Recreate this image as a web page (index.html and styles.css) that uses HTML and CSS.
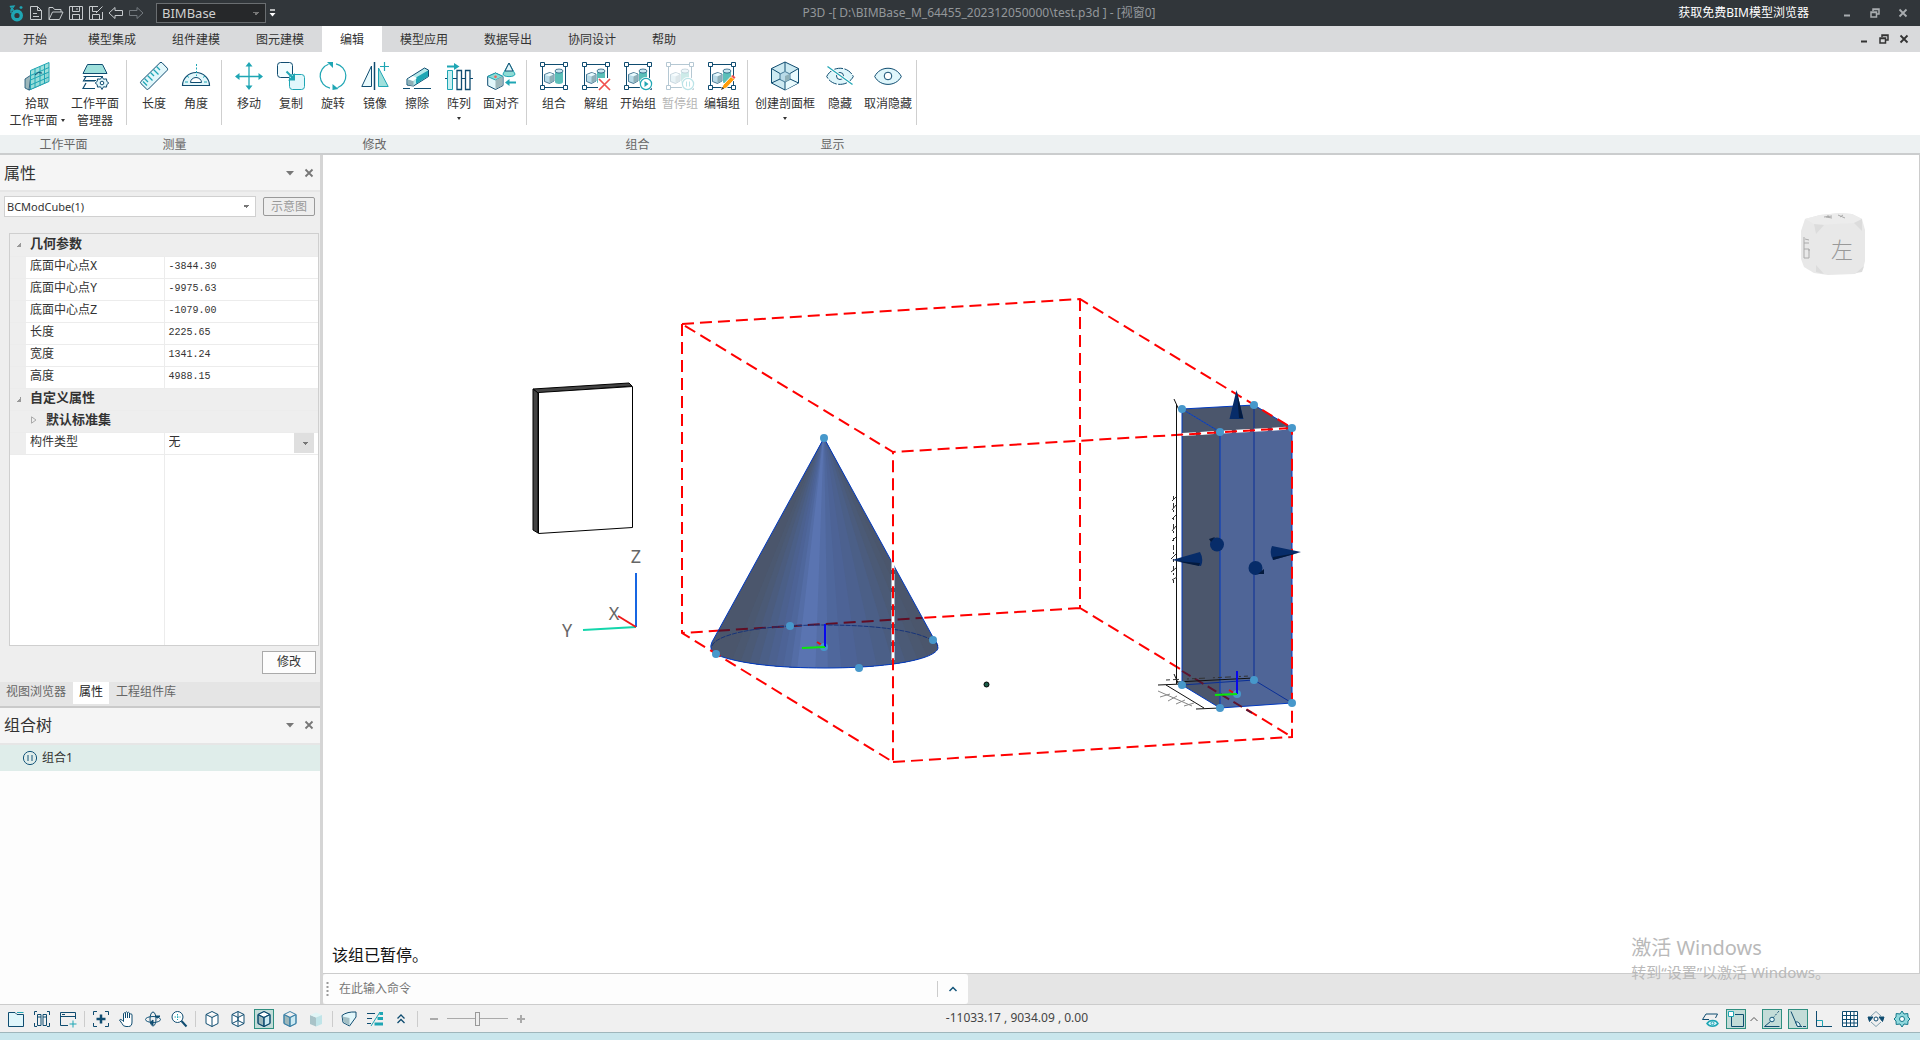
FILE: index.html
```html
<!DOCTYPE html>
<html lang="zh-CN">
<head>
<meta charset="utf-8">
<title>P3D - BIMBase</title>
<link rel="stylesheet" href="styles.css">
</head>
<body>
<svg class="defs" aria-hidden="true">
  <symbol id="frame" viewBox="0 0 28 28">
    <path d="M2.500 2.500h23v23h-23z" fill="none" stroke="#0f4c70"/>
    <path d="M.5.500h4v4h-4zM23.500.500h4v4h-4zM.5 23.500h4v4h-4zM23.500 23.500h4v4h-4z" fill="#fff" stroke="#0f4c70"/>
    <path d="M15 9v11c0 2.500 8 2.500 8 0V9z" fill="#5bbfb9"/><ellipse cx="19" cy="9" rx="4" ry="2" fill="#c9e6f0" stroke="#0f4c70" stroke-width=".7"/>
    <path d="M4.500 12.500l5-2 4.500 1.500v7l-4.500 2.500-5-2z" fill="#b9dbe8" stroke="#0f4c70" stroke-width=".7"/>
    <path d="M9.500 14.500l4-2v6.500l-4 2z" fill="#8fb0b8"/><path d="M5 13l5-2 3.500 1.300-4 2z" fill="#eafafd"/>
  </symbol>
  <symbol id="cube" viewBox="0 0 18 18">
    <path d="M9 1.500l6 3v9l-6 3-6-3v-9zM3 4.500l6 3 6-3M9 7.500v9" stroke-linejoin="round"/>
  </symbol>
  <symbol id="restore" viewBox="0 0 10 10"><path d="M3 3V1h6v5H7M3 1.500h6" fill="none" stroke="currentColor" stroke-width="1.500"/><path d="M1 4h5.500v5H1zM1 4.500h5" fill="none" stroke="currentColor" stroke-width="1.500"/></symbol>
  <symbol id="close" viewBox="0 0 10 10"><path d="M1.500 1.500l7 7M8.500 1.500l-7 7" stroke="currentColor" stroke-width="1.800"/></symbol>
  <symbol id="min" viewBox="0 0 10 10"><path d="M2 7.500h6" stroke="currentColor" stroke-width="2"/></symbol>
  <symbol id="down" viewBox="0 0 10 10"><path d="M1 3h8L5 7.500z" fill="currentColor"/></symbol>
</svg>

<header class="titlebar">
  <div class="quick">
    <button class="qa" aria-label="BIMBase"><svg viewBox="0 0 18 18"><circle cx="10" cy="11.500" r="4.300" fill="none" stroke="#1fa6b4" stroke-width="3.400"/><path d="M4 9V6h3M3.500 2.500L7 2 5 5zM12.500 3.500h3M14 2v3" fill="none" stroke="#1fa6b4" stroke-width="1.300"/></svg></button>
    <button class="qa" aria-label="新建"><svg viewBox="0 0 18 18"><path d="M3.500 2.500h7l4 4v9h-11zM10.500 2.500v4h4M6 9.500h4M6 12.500h6"/></svg></button>
    <button class="qa" aria-label="打开"><svg viewBox="0 0 18 18"><path d="M2 15.500v-12h4l1.500 2H14v2.500M2 15.500L5.500 8H16l-3.500 7.500z"/></svg></button>
    <button class="qa" aria-label="保存"><svg viewBox="0 0 18 18"><path d="M2.500 2.500h13v13h-13zM5.500 2.500v5h7v-5M5.500 15.500v-5h7v5M10 4v2"/></svg></button>
    <button class="qa" aria-label="另存为"><svg viewBox="0 0 18 18"><path d="M11 2.500H2.500v13h13V8M5.500 2.500v5h5M5.500 15.500v-5h7v5M9 9l6.500-6.500"/></svg></button>
    <button class="qa" aria-label="撤销"><svg viewBox="0 0 18 18"><path d="M2 9l6-5.500v3h7.500v5H8v3z"/></svg></button>
    <button class="qa dim" aria-label="重做"><svg viewBox="0 0 18 18"><path d="M16 9l-6-5.500v3H2.500v5H10v3z"/></svg></button>
    <select class="workspace" aria-label="工作空间"><option>BIMBase</option></select>
    <button class="more" aria-label="自定义"><svg viewBox="0 0 10 10"><path d="M3 2h5" stroke="#fff" stroke-width="1.300"/><path d="M2.500 5h6l-3 3.500z" fill="#fff"/></svg></button>
  </div>
  <h1 class="doc">P3D -[ D:\BIMBase_M_64455_202312050000\test.p3d ] - [视窗0]</h1>
  <div class="window-controls">
    <a href="#" class="get">获取免费BIM模型浏览器</a>
    <button class="wc wide" aria-label="最小化"><svg><use href="#min"/></svg></button>
    <button class="wc wide" aria-label="还原"><svg><use href="#restore"/></svg></button>
    <button class="wc wide" aria-label="关闭"><svg><use href="#close"/></svg></button>
  </div>
</header>

<nav class="tabs">
  <a href="#" class="file">开始</a><a href="#">模型集成</a><a href="#">组件建模</a><a href="#">图元建模</a><a href="#" class="active">编辑</a><a href="#">模型应用</a><a href="#">数据导出</a><a href="#">协同设计</a><a href="#">帮助</a>
  <div class="doc-controls">
    <button class="wc" aria-label="最小化文档"><svg><use href="#min"/></svg></button>
    <button class="wc" aria-label="还原文档"><svg><use href="#restore"/></svg></button>
    <button class="wc" aria-label="关闭文档"><svg><use href="#close"/></svg></button>
  </div>
</nav>

<section class="ribbon">
  <div class="group">
    <div class="items">
      <button class="item w62"><svg viewBox="0 0 28 28"><path d="M2 17l6-4v14l-2 1-4-2z" fill="#9db7bb" stroke="#0f4c70" stroke-width=".8"/><path d="M6 28l18-8V11L8 13z" fill="#c9e6f0" stroke="#0f4c70" stroke-width=".8"/><path d="M7.500 8.500L26 .5v19L7.500 27.500z" fill="#8edbd5" fill-opacity=".85" stroke="#1fa6b4"/><path d="M12 6.500v19M17 4.500v19M21.500 2.500v19M7.500 13.500l18.500-8M7.500 18l18.500-8M7.500 23L26 15" stroke="#1fa6b4" fill="none"/><path d="M12 13q3-4 7-2" stroke="#0f4c70" fill="none"/></svg><span>拾取<br>工作平面<i class="tri"></i></span></button>
      <button class="item w54"><svg viewBox="0 0 28 28"><path d="M6.500 2.500h15L26 11.500H2z" fill="#9fe0dc" stroke="#0f4c70"/><path d="M22 14.500H2.500M2.500 14.500h3M4 18.500h11M5 14.500L2.500 19H14M5 21l-3 5.500h12" fill="none" stroke="#0f4c70" stroke-width="1.200"/><path d="M21 14.500l1.500 2.700 3-.3.300 2.500 2 1.600-2 1.600-.3 2.500-3-.3L21 27.500l-1.500-2.700-3 .3-.3-2.500-2-1.600 2-1.600.3-2.500 3 .3z" fill="#e2f7fb" stroke="#0f4c70"/><circle cx="21" cy="21" r="1.800" fill="#fff" stroke="#0f4c70"/></svg><span>工作平面<br>管理器</span></button>
    </div>
    <div class="caption">工作平面</div>
  </div>
  <div class="group">
    <div class="items">
      <button class="item w42"><svg viewBox="0 0 28 28"><path d="M20 .7q1-.7 2 0l5.300 5.500q.7 1 0 2L8.500 27q-1 .9-2 0L.9 21.500q-.9-1 0-2z" fill="#e2f7fb" stroke="#0f4c70"/><path d="M4.500 16.500l3.500 3.500M7.500 13.500l5 5M10.500 10.500l3.500 3.500M13.500 7.500l5 5M16.500 4.500L20 8M3 19.500l4 4" stroke="#1fa6b4" stroke-width="1.300"/></svg><span>长度</span></button>
      <button class="item w42"><svg viewBox="0 0 28 28"><path d="M.5 23.500a13.500 13 0 0 1 27 0z" fill="#e2f7fb" stroke="#0f4c70" stroke-width="1.200"/><path d="M8.500 20.500a5.500 5 0 0 1 11 0z" fill="#fff" stroke="#0f4c70"/><path d="M14.500 2v12" stroke="#1fa6b4" stroke-dasharray="2 1.500"/><path d="M5 14l2 1.500M23 14l-2 1.500M3 20h3M22 20h3" stroke="#1fa6b4"/></svg><span>角度</span></button>
    </div>
    <div class="caption">测量</div>
  </div>
  <div class="group">
    <div class="items">
      <button class="item w42"><svg viewBox="0 0 28 28"><path d="M14 2v24M2 14.500h24" stroke="#1fa6b4" stroke-width="1.300"/><path d="M14 0l3.500 4.500h-7zM14 28l3.500-4.500h-7zM0 14.500L4.500 11v7zM28 14.500L23.500 11v7z" fill="#1fa6b4"/></svg><span>移动</span></button>
      <button class="item w42"><svg viewBox="0 0 28 28"><rect x=".5" y=".5" width="15" height="15" rx="3" fill="#f2fcfe" stroke="#0f4c70"/><rect x="12.500" y="12.500" width="15" height="15" rx="3" fill="#e2f7fb" stroke="#1fa6b4"/><path d="M9.500 9.500l6 6" stroke="#1fa6b4" stroke-width="2"/><path d="M18 11v7.500h-7z" fill="#1fa6b4"/></svg><span>复制</span></button>
      <button class="item w42"><svg viewBox="0 0 28 28"><path d="M9.500 2.200a12.500 12.500 0 0 0 1.500 24M18.500 25.800a12.500 12.500 0 0 0-1.500-24" fill="none" stroke="#1fa6b4" stroke-width="1.200"/><path d="M8 0h6v6zM13.500 28v-6l6 5z" fill="#1fa6b4"/></svg><span>旋转</span></button>
      <button class="item w42"><svg viewBox="0 0 28 28"><path d="M.8 24.500h9.700V4z" fill="#e8f9fc" stroke="#0f4c70"/><path d="M17.500 24.500h9.700L17.500 6z" fill="#9fe0dc" stroke="#1fa6b4"/><path d="M13.500 0v28" stroke="#0f4c70" stroke-width="1.500"/><path d="M23.500 0v9M19 4.500h9" stroke="#1fa6b4" stroke-width="1.200"/></svg><span>镜像</span></button>
      <button class="item w42"><svg viewBox="0 0 28 28"><path d="M0 26.500h7M11 26.500h17" stroke="#0f4c70"/><path d="M4 17L21.500 6l4 2v6.500L10.500 24 4 23z" fill="#b7e9ea" stroke="#0f4c70"/><path d="M13 15.500L25 8.500v6L13 22z" fill="#1fa6b4"/><path d="M4.500 17.500l6 1.500v5L5 23z" fill="#8fb0b8"/><path d="M5 17l5-3 4 2-4 3z" fill="#fff"/></svg><span>擦除</span></button>
      <button class="item w42"><svg viewBox="0 0 28 28"><path d="M2 4.500h8" stroke="#1fa6b4" stroke-width="2"/><path d="M9 1l5.500 3.500L9 8z" fill="#1fa6b4"/><path d="M0 16.500h28" stroke="#0f4c70"/><path d="M2.500 8.500h5v19h-5z" fill="#c9f0f2" stroke="#1fa6b4"/><path d="M12 8.500h4.500v19H12zM20.500 8.500H25v19h-4.500z" fill="#fff" stroke="#0f4c70" stroke-width="1.300"/></svg><span>阵列</span><i class="tri below"></i></button>
      <button class="item w42"><svg viewBox="0 0 28 28"><path d="M22 1l6 11c0 3.500-12 3.500-12 0z" fill="#8edbd5" stroke="#1fa6b4"/><path d="M22 1l4 8h-8z" fill="#e2f7fb" stroke="#0f4c70"/><path d="M.7 14.500L8.500 11l7.500 3.500v9L8.500 27.500.7 23.500z" fill="#e2f7fb" stroke="#0f4c70"/><path d="M.7 14.500L8.500 11l7.500 3.500-7.500 3.500z" fill="#8edbd5" stroke="#1fa6b4"/><path d="M8.500 18l7-3.500v9l-7 3.500z" fill="#9db7bb"/><circle cx="8.500" cy="14.800" r="1.300" fill="#f0605a"/><path d="M21 20.500h8" stroke="#1fa6b4" stroke-width="2"/><path d="M22.500 17v7L18 20.500z" fill="#1fa6b4"/></svg><span>面对齐</span></button>
    </div>
    <div class="caption">修改</div>
  </div>
  <div class="group">
    <div class="items">
      <button class="item w42"><svg viewBox="0 0 28 28"><use href="#frame"/></svg><span>组合</span></button>
      <button class="item w42"><svg viewBox="0 0 28 28"><use href="#frame"/><path d="M16 16h13v13H16z" fill="#fff"/><path d="M17 17l11 11M28 17L17 28" stroke="#f0504e" stroke-width="1.700"/></svg><span>解组</span></button>
      <button class="item w42"><svg viewBox="0 0 28 28"><use href="#frame"/><circle cx="22" cy="22" r="7" fill="#fff"/><circle cx="22" cy="22" r="5.600" fill="#fff" stroke="#1fa6b4" stroke-width="1.200"/><path d="M20.500 19l4 3-4 3z" fill="#1fa6b4"/></svg><span>开始组</span></button>
      <button class="item w42" disabled><svg viewBox="0 0 28 28"><use href="#frame"/><circle cx="22" cy="22" r="7" fill="#fff"/><circle cx="22" cy="22" r="5.600" fill="#fff" stroke="#1fa6b4" stroke-width="1.200"/><path d="M20.500 19.500v5M23.500 19.500v5" stroke="#1fa6b4"/></svg><span>暂停组</span></button>
      <button class="item w42"><svg viewBox="0 0 28 28"><use href="#frame"/><path d="M13 28l2-5 8-8.500 3.500 3-8 8.500z" fill="#ff9d0a" stroke="#fff"/><path d="M23 14l3 3 1.500-1.500L25 13z" fill="#f0504e"/><path d="M13 28l1.200-3 2 1.600z" fill="#3a3a3a"/></svg><span>编辑组</span></button>
    </div>
    <div class="caption">组合</div>
  </div>
  <div class="group">
    <div class="items">
      <button class="item w62"><svg viewBox="0 0 28 28"><path d="M14 0l13.500 6.500v14.500L14 28 .5 21V6.500z" fill="#cdeaf2" stroke="#0f4c70"/><path d="M14 28V14L27 7v14z" fill="#e9fafd"/><path d="M14 0v9M.5 6.500L9 11.500M27.500 6.500L19 11.500M.5 21L9 17M27.500 21L19 17M14 28v-8" stroke="#0f4c70"/><path d="M9 12l5-2.500 5 2.500v5.500L14 20l-5-2.500z" fill="#b9dbe8" stroke="#0f4c70" stroke-width=".7"/><path d="M14 14l4.500-2v5.500L14 19.500z" fill="#8fb0b8"/></svg><span>创建剖面框</span><i class="tri below"></i></button>
      <button class="item w48"><svg viewBox="0 0 28 28"><path d="M.7 14.500C6 3.500 22 3.500 27.300 14.500 22 25 6 25 .7 14.500z" fill="#dff6fb" stroke="#0f4c70" stroke-dasharray="9 1.500"/><circle cx="14" cy="14" r="3.500" fill="#fff" stroke="#0f4c70"/><path d="M1.500 4.500l25 18" stroke="#fff" stroke-width="3"/><path d="M1.500 4.500l25 18" stroke="#1fa6b4" stroke-width="1.200"/></svg><span>隐藏</span></button>
      <button class="item w48"><svg viewBox="0 0 28 28"><path d="M.7 14.500C6 3.500 22 3.500 27.300 14.500 22 25 6 25 .7 14.500z" fill="#dff6fb" stroke="#0f4c70"/><circle cx="14" cy="14" r="3.800" fill="#fff" stroke="#0f4c70"/></svg><span>取消隐藏</span></button>
    </div>
    <div class="caption">显示</div>
  </div>
  <div class="group rest"><div class="items"></div><div class="caption"></div></div>
</section>

<main class="work">
  <aside class="side">
    <section class="props">
      <header class="panel-head"><h2>属性</h2><button aria-label="菜单"><svg><use href="#down"/></svg></button><button aria-label="关闭"><svg><use href="#close"/></svg></button></header>
      <div class="pick"><select aria-label="对象"><option>BCModCube(1)</option></select><button class="sketch">示意图</button></div>
      <div class="grid">
        <table>
          <colgroup><col class="c-gut"><col class="c-name"><col></colgroup>
          <tbody>
          <tr class="cat"><td class="gut"><i class="open"></i></td><th colspan="2">几何参数</th></tr>
          <tr><td class="gut"></td><td>底面中心点X</td><td>-3844.30</td></tr>
          <tr><td class="gut"></td><td>底面中心点Y</td><td>-9975.63</td></tr>
          <tr><td class="gut"></td><td>底面中心点Z</td><td>-1079.00</td></tr>
          <tr><td class="gut"></td><td>长度</td><td>2225.65</td></tr>
          <tr><td class="gut"></td><td>宽度</td><td>1341.24</td></tr>
          <tr><td class="gut"></td><td>高度</td><td>4988.15</td></tr>
          <tr class="cat"><td class="gut"><i class="open"></i></td><th colspan="2">自定义属性</th></tr>
          <tr class="cat sub"><td class="gut"></td><th colspan="2"><svg viewBox="0 0 8 8"><path d="M1.500.8L6 4 1.500 7.200z" fill="none" stroke="#aaa"/></svg>默认标准集</th></tr>
          <tr><td class="gut"></td><td>构件类型</td><td><select aria-label="构件类型"><option>无</option></select></td></tr>
          <tr class="fill"><td></td><td></td><td></td></tr>
          </tbody>
        </table>
      </div>
      <div class="apply"><button>修改</button></div>
      <nav class="dock"><a href="#">视图浏览器</a><a href="#" class="active">属性</a><a href="#">工程组件库</a></nav>
    </section>
    <section class="tree">
      <header class="panel-head"><h2>组合树</h2><button aria-label="菜单"><svg><use href="#down"/></svg></button><button aria-label="关闭"><svg><use href="#close"/></svg></button></header>
      <ul><li><svg viewBox="0 0 16 16"><circle cx="8" cy="8" r="6.600" fill="none" stroke="#14557a"/><path d="M6 5v6M10 5v6" stroke="#14557a"/></svg>组合1</li></ul>
    </section>
  </aside>

  <div class="stage">
    <div class="canvas">
      <svg class="scene" viewBox="323 155 1596 818" role="img" aria-label="三维视图">
        <defs><clipPath id="cone"><path d="M824 438L712 642Q708 650 717 655C740 664 780 668 825 668C890 668 936 659 938 648Q938 643 934 639z"/></clipPath></defs>
        <path d="M533 389l96-6 3 3-94 7z" fill="#444" stroke="#000"/>
        <path d="M533 389l5 4v140l-5-3z" fill="#444" stroke="#000"/>
        <path d="M538.500 392.500l94-6v141l-94 6z" fill="#fff" stroke="#000"/>
        <g class="box"><path d="M1080 299V608L1292 737M1080 608L682 633"/></g>

        <g clip-path="url(#cone)">
          <path d="M824 400L640 680H1010z" fill="#4b566c"/>
          <path d="M824 430L724 680H938z" fill="#4b5870"/>
          <path d="M824 430L734 680H926z" fill="#4b5a76"/>
          <path d="M824 430L744 680H912z" fill="#4b5c7e"/>
          <path d="M824 430L754 680H898z" fill="#4b5f87"/>
          <path d="M824 430L764 680H880z" fill="#4c618f"/>
          <path d="M824 430L773 680H860z" fill="#4d6396"/>
          <path d="M824 430L781 680H842z" fill="#4f679c"/>
          <path d="M824 430L789 680H828z" fill="#546da6"/>
          <path d="M824 430L796 680H815z" fill="#5a74b1"/>
          <path d="M682 633L1080 608" stroke="#610d24" stroke-width="2" stroke-dasharray="12 6"/>
        </g>
        <path d="M824 438L712 642Q708 650 717 655C740 664 780 668 825 668C890 668 936 659 938 648Q938 643 934 639z" fill="none" stroke="#0039c0"/>
        <path d="M712 646C716 634 760 625 825 625C890 625 932 634 938 646" fill="none" stroke="#173479" stroke-dasharray="5 1"/>

        <g fill="#4b566c"><path d="M1182 409l72-4 38 23-72 4z"/><path d="M1182 409l38 23v276l-38-23z"/></g>
        <path d="M1220 432l72-4v275l-72 5z" fill="#4f6597"/>
        <g fill="none" stroke="#0a2f96"><path d="M1254 405V680M1182 685l72-5 38 23"/><path d="M1182 409l72-4 38 23-72 4zM1182 409V685l38 23 72-5V428M1220 432V708" stroke="#0039c0"/></g>
        <path d="M1182 671L1252 713" stroke="#5d1430" stroke-width="2" stroke-dasharray="10 5"/>
        <g class="halo"><path d="M1182 434.500L1292 428M893 520V664"/></g>
        <g class="box"><path d="M682 324L1080 299L1292 428L893 452zM682 324V633L893 762V452M893 762L1292 737V428"/></g>

        <g fill="none" stroke="#111"><path d="M1176.500 404V684M1174 399l5 11 5 2M1174 674l5 11 4 2M1176 682l78-4M1158 685l24-1M1166 685l38 23M1196 709l24-1"/></g>
        <g fill="none" stroke="#333"><path d="M1173.500 496v90" stroke-dasharray="3 4 5 2 2 5"/><path d="M1176 497l-4 4M1176 505l-4 5M1176 515l-4 4M1176 526l-4 5M1176 537l-4 4M1176 554l-5 5M1176 568l-5 4M1177 577l-5 3"/><path d="M1166 680l84-4" stroke-dasharray="4 3 6 8 2 3"/><path d="M1158 691l34 15M1160 697l10-3M1168 701l9-5M1176 704l9-4M1184 706l10-3" stroke="#888"/></g>

        <g fill="#072c69"><path d="M1236.500 390l7 29h-14zM1172 560l28-8q4 7 1 14zM1301 552l-29-6q-3 7 1 14z"/><circle cx="1217" cy="544.500" r="7"/><circle cx="1255.500" cy="568" r="7"/></g>
        <path d="M1237 392l6 26h-4zM1175 561l25 2-1 3zM1298 553l-25 4v3zM1209 539l6-2-4 5zM1258 574l6 0v-5z" fill="#041a3e"/>

        <g fill="none" stroke-width="2"><path d="M1237 695l-8-5M825 647l-8-5" stroke="#e01010"/></g>
        <g fill="#4798cb"><circle cx="824" cy="438" r="4"/><circle cx="790" cy="626" r="4"/><circle cx="716" cy="654" r="4"/><circle cx="859" cy="668" r="4"/><circle cx="933" cy="640" r="4"/><circle cx="824" cy="647" r="4"/><circle cx="1182" cy="409" r="4"/><circle cx="1254" cy="405" r="4"/><circle cx="1292" cy="428" r="4"/><circle cx="1220" cy="432" r="4"/><circle cx="1182" cy="685" r="4"/><circle cx="1254" cy="680" r="4"/><circle cx="1292" cy="703" r="4"/><circle cx="1220" cy="708" r="4"/><circle cx="1237" cy="694" r="4"/></g>
        <g fill="none" stroke-width="2"><path d="M825 647V624M1237 694V671" stroke="#0808ee"/><path d="M825 647l-23 1M1237 694l-22 1" stroke="#0ae80a"/></g>

        <circle cx="986.500" cy="684.500" r="2.500" fill="#1b5c48" stroke="#000"/>
        <g fill="none" stroke-width="2"><path d="M636 627V573" stroke="#1766e2"/><path d="M636 627l-53 3" stroke="#14d6ac"/><path d="M636 627l-18-11" stroke="#f01818"/></g>
        <g class="axis"><text x="636" y="563">Z</text><text x="614" y="620">X</text><text x="567" y="637">Y</text></g>
      </svg>
      <svg class="viewcube" viewBox="0 0 66 64" role="img" aria-label="视图方块">
        <path d="M1 18L5 6 20 2 40 0l12 1 10 5 3 11v31l-2 8-8 5-27 1-14-2-10-6-3-8z" fill="#e8e8e8"/>
        <path d="M5 6L20 2l20-2 12 1 10 5-8 4-38 2z" fill="#ececec"/>
        <path d="M14 11l10 1-8 9zM62 6l-8 4 8 8zM16 52l8 9-8-2zM64 53l-8 7 6-1z" fill="#dcdcdc"/>
        <text x="42" y="45">左</text>
        <path d="M4 24v21h5v-9H4M4 30h5M5 26l4 1M9 38v-2M24 4l8-1M28 2v2M26 4l6 1M38 2l7 3M40 4l3-2" fill="none" stroke="#aaa"/>
      </svg>
      <p class="message">该组已暂停。</p>
    </div>
    <div class="command">
      <div class="cmdbox">
        <svg viewBox="0 0 3 16" class="grip"><path d="M1.500 1v15" stroke="#999" stroke-width="2" stroke-dasharray="2 2"/></svg>
        <input type="text" placeholder="在此输入命令" aria-label="命令">
        <button aria-label="展开"><svg viewBox="0 0 10 10"><path d="M1.500 7L5 3.500 8.500 7" fill="none" stroke="#14557a" stroke-width="1.500"/></svg></button>
      </div>
    </div>
    <div class="watermark"><p>激活 Windows</p><p class="small">转到“设置”以激活 Windows。</p></div>
  </div>
</main>

<footer class="status">
  <div class="tools">
    <button aria-label="视图"><svg viewBox="0 0 18 18"><path d="M1.500 2.500H8l2 2h6.500v12h-15z" fill="#dff6fb"/><path d="M10 2.500h6.500" stroke="#1fa6b4"/></svg></button>
    <button aria-label="排列"><svg viewBox="0 0 18 18"><path d="M4 1.500H1.500V5M14 1.500h2.500V5M4 16.500H1.500V13M14 16.500h2.500V13M4.500 4.500H8v11H4.500zM10 4.500h3.500v11H10zM4.500 7H8M10 7h3.500"/></svg></button>
    <button aria-label="新窗口"><svg viewBox="0 0 18 18"><path d="M9 15.500H1.500v-13h15V9M1.500 6.500h15M3 4.500h3"/><path d="M14 10.500v7M10.500 14h7" stroke="#1fa6b4"/></svg></button>
    <i class="sep"></i>
    <button aria-label="全图"><svg viewBox="0 0 18 18"><path d="M1.500 5V1.500H5M13 1.500h3.500V5M1.500 13v3.500H5M13 16.500h3.500V13"/><path d="M9 4.500v9M4.500 9h9" stroke-width="2.500"/></svg></button>
    <button aria-label="平移"><svg viewBox="0 0 18 18"><path d="M5.500 10V3.500q1-1.500 2 0V8 2.500q1-1.500 2 0V8 3q1-1.500 2 0v5-3.500q1.500-1.500 2.500 0V12q0 4.500-3.500 4.500H8q-3 0-4-3L1.500 10q1-1.500 3 .5l1 1z" fill="#fff"/></svg></button>
    <button aria-label="旋转"><svg viewBox="0 0 18 18"><ellipse cx="9" cy="9" rx="3" ry="7"/><ellipse cx="9" cy="9.500" rx="7.500" ry="3" stroke="#14557a"/><path d="M9 10l-3 2.500 3 2.500zM11 6l2.500 2 2.500-2z" fill="#0f4c70"/></svg></button>
    <button aria-label="缩放"><svg viewBox="0 0 18 18"><circle cx="7.500" cy="7" r="5.500" fill="#fff"/><path d="M11.500 11l5 5.500" stroke-width="2"/><path d="M7.500 4v6M4.500 7h6" stroke="#1fa6b4" stroke-dasharray="1.500 1"/></svg></button>
    <i class="sep"></i>
    <button aria-label="线框"><svg viewBox="0 0 18 18"><use href="#cube" fill="#fff"/></svg></button>
    <button aria-label="隐线"><svg viewBox="0 0 18 18"><use href="#cube" fill="#fff"/><path d="M9 1.500v9M3 13.500l6-3 6 3"/></svg></button>
    <button aria-label="着色带边" class="on"><svg viewBox="0 0 18 18"><path d="M3 4.500l6 3v9l-6-3z" fill="#9db7bb"/><path d="M3 4.500l6-3 6 3-6 3z" fill="#fff"/><path d="M9 7.500l6-3v9l-6 3z" fill="#cdeaf2"/><use href="#cube" fill="none"/></svg></button>
    <button aria-label="真实" class="soft"><svg viewBox="0 0 18 18"><path d="M3 4.500l6 3v9l-6-3z" fill="#9db7bb"/><path d="M9 7.500l6-3v9l-6 3z" fill="#cdeaf2"/><use href="#cube" fill="none"/></svg></button>
    <button aria-label="着色" class="flat"><svg viewBox="0 0 18 18"><path d="M3 5l6 2.500v9L3 14z" fill="#a9c3c8"/><path d="M3 5l6-2.500L15 5 9 7.500z" fill="#e0f5f6"/><path d="M9 7.500L15 5v9l-6 2.500z" fill="#c0e4e8"/></svg></button>
    <i class="sep"></i>
    <button aria-label="剖切"><svg viewBox="0 0 18 18"><path d="M2 5.500q5-4 14-3.500v5L9.500 16 3 12.500z" fill="#e2f7fb"/><path d="M2.500 6.500l7 1.500v7.500L3.500 12z" fill="#a3bfc5" stroke="none"/></svg></button>
    <button aria-label="线宽"><svg viewBox="0 0 18 18"><path d="M1 3.500h8M1 8.500h5M1 13.500h4"/><path d="M5 16L14 2" stroke="#1fa6b4"/><path d="M13.500 3.500H17M11.500 8.500H17M8.500 14H17" stroke="#1fa6b4" stroke-width="3"/></svg></button>
    <button aria-label="更多"><svg viewBox="0 0 18 18"><path d="M5.500 8.500L9 5l3.500 3.500M5.500 13L9 9.500l3.500 3.500" stroke-width="1.300"/></svg></button>
    <i class="sep"></i>
    <button aria-label="缩小"><svg viewBox="0 0 18 18"><path d="M5 9h8" stroke="#aaa" stroke-width="2"/></svg></button>
    <input type="range" aria-label="比例" value="50">
    <button aria-label="放大"><svg viewBox="0 0 18 18"><path d="M5 9h8M9 5v8" stroke="#aaa" stroke-width="2"/></svg></button>
  </div>
  <output class="coords">-11033.17 , 9034.09 , 0.00</output>
  <div class="snaps">
    <button aria-label="工作面"><svg viewBox="0 0 18 18"><path d="M8 9.500H1.500L5 4h11.500l-2 4" fill="none"/><path d="M6 13.500c2.500-4 9-4 11 0-2.500 3.500-8.500 3.500-11 0z" fill="#dff6fb" stroke="#1fa6b4" stroke-width="1.500"/><circle cx="11.500" cy="13.300" r="1.500" stroke="#1fa6b4"/></svg></button>
    <button aria-label="捕捉" class="on"><svg viewBox="0 0 18 18"><path d="M8 4.500h8.500v12H4.500V7"/><path d="M1.500 1.500h5v5h-5z" fill="#fff" stroke="#1fa6b4"/></svg></button>
    <button aria-label="捕捉选项" class="caret"><svg viewBox="0 0 10 10"><path d="M1.500 7L5 3.500 8.500 7" fill="none" stroke="#555"/></svg></button>
    <button aria-label="最近点" class="on"><svg viewBox="0 0 18 18"><path d="M16.500 16.500h-15l6-5"/><path d="M10 8l6-7" stroke-dasharray="2 1.500"/><circle cx="9" cy="9.500" r="2.300" fill="#dff6fb" stroke="#14557a"/></svg></button>
    <button aria-label="极轴" class="on"><svg viewBox="0 0 18 18"><path d="M2 1.500L8.500 16.500"/><path d="M10 16.500h7" stroke-dasharray="3 1"/><path d="M6.500 12q4-1 5 4.500h-3z" fill="#dff6fb"/></svg></button>
    <button aria-label="正交"><svg viewBox="0 0 18 18"><path d="M1.500 1v15.500H17"/><path d="M2 10.500h5.500v6" stroke="#1fa6b4"/></svg></button>
    <button aria-label="栅格"><svg viewBox="0 0 18 18"><path d="M1.500 1.500h15v15h-15zM5.500 1.500v15M9.500 1.500v15M13 1.500v15M1.500 5.500h15M1.500 9.500h15M1.500 13h15" fill="#fff"/></svg></button>
    <button aria-label="夹点"><svg viewBox="0 0 18 18"><path d="M4 6l5-4.500L14 6M4 12l5 4.500 5-4.500" stroke="#7f9fae"/><path d="M1 7l5 0-3.500 4.500zM17 7h-5l3.500 4.500z" fill="#0f4c70"/><circle cx="9" cy="9" r="2" fill="#fff"/></svg></button>
    <button aria-label="设置"><svg viewBox="0 0 18 18"><path d="M9 1l2 3 3.800-.5.200 3.500 2 2-2 2-.2 3.500L11 14l-2 3-2-3-3.800.5L3 11 1 9l2-2 .2-3.500L7 4z" fill="#8fd9dd" stroke="#14788a"/><circle cx="9" cy="9" r="2.500" fill="#fff" stroke="#14788a"/></svg></button>
  </div>
</footer>
<div class="taskbar"></div>
</body>
</html>
```
FILE: styles.css
```css
* { box-sizing: border-box; }

body {
  margin: 0;
  height: 100vh;
  display: flex;
  flex-direction: column;
  overflow: hidden;
  font: 12px/18px "Noto Sans", "Noto Sans CJK SC", sans-serif;
  color: #333;
  background: #fff;
}

button, select, input { font: inherit; color: inherit; margin: 0; }
button { border: 0; padding: 0; background: none; display: grid; place-items: center; }
h1, h2, p, ul { margin: 0; padding: 0; font-weight: normal; }
a { color: inherit; text-decoration: none; }
svg { display: block; }
.defs { position: absolute; width: 0; height: 0; }

/* Drop-down arrow, shared by every select */
select {
  --arrow: linear-gradient(45deg, transparent 50%, #777 50%) right 9px center / 3px 3px no-repeat,
           linear-gradient(315deg, transparent 50%, #777 50%) right 6px center / 3px 3px no-repeat;
  appearance: none;
  border-radius: 0;
}

/* Title bar */
.titlebar {
  flex: none;
  height: 26px;
  display: grid;
  grid-template-columns: 1fr auto 1fr;
  align-items: center;
  background: #31363a;
}
.quick { display: flex; align-items: center; padding-left: 5px; }
.qa { width: 20px; height: 26px; }
.qa:first-child { width: 21px; }
.qa svg { width: 18px; height: 18px; fill: none; stroke: #c6cacd; }
.qa.dim svg { stroke: #757b80; }
.workspace {
  width: 110px;
  height: 20px;
  margin-left: 10px;
  padding: 0 5px;
  border: 1px solid #6a6e71;
  background: var(--arrow), #26282a;
  color: #d0d0d0;
  font-size: 13px;
  line-height: 16px;
}
.more { width: 12px; height: 26px; }
.more svg { width: 10px; height: 10px; }
.doc { padding-left: 38px; font-size: 12px; color: #93979a; white-space: nowrap; }
.window-controls { display: flex; justify-content: flex-end; align-items: center; padding-right: 3px; }
.get { color: #fff; margin-right: 24px; }
.wc { width: 20px; height: 26px; color: #333; }
.wc svg { width: 10px; height: 10px; }
.wc.wide { width: 28px; color: #a9adb0; }

/* Ribbon tabs */
.tabs { flex: none; height: 26px; display: flex; background: #d9dadc; line-height: 28px; }
.tabs a { height: 26px; padding: 0 18px; }
.tabs .file { width: 70px; padding: 0 23px; }
.tabs .active { background: #fff; }
.doc-controls { display: flex; margin-left: auto; padding-right: 6px; }

/* Ribbon */
.ribbon { flex: none; display: flex; border-bottom: 2px solid #cbcdce; }
.group { flex: none; }
.items { position: relative; height: 83px; display: flex; padding: 10px 5px 0 6px; }
.items::after { content: ""; position: absolute; right: 0; top: 8px; width: 1px; height: 65px; background: #cfcfcf; }
.rest { flex: 1; }
.rest .items::after { display: none; }
.caption { height: 18px; line-height: 20px; text-align: center; color: #666; background: #edf1f2; }
.item { display: flex; flex-direction: column; align-items: center; height: 70px; line-height: 17px; white-space: nowrap; }
.item svg { width: 28px; height: 28px; margin-bottom: 5px; overflow: visible; fill: none; }
.item:disabled svg { opacity: .3; }
.item:disabled span { color: #b5b5b5; }
.w42 { width: 42px; }
.w48 { width: 48px; }
.w54 { width: 54px; }
.w62 { width: 62px; }
.tri { display: inline-block; margin: 0 0 3px 3px; border: 2px solid transparent; border-top: 3px solid #333; border-bottom: 0; }
.tri.below { margin: 5px 0 0; }

/* Work area */
.work { flex: 1; min-height: 0; display: flex; }
.side { flex: none; width: 323px; display: flex; flex-direction: column; border-right: 3px solid #d5d5d5; }
.props { flex: 65 1 0; display: flex; flex-direction: column; background: #eee; border-bottom: 2px solid #cacaca; }
.tree { flex: 35 1 0; background: #fdfdfd; }
.panel-head { flex: none; height: 37px; display: flex; align-items: center; padding: 0 2px 0 4px; background: #f5f5f5; border-bottom: 2px solid #e6e6e6; }
.panel-head h2 { flex: 1; font-size: 16px; line-height: 24px; }
.panel-head button { width: 19px; height: 20px; color: #777; }
.panel-head svg { width: 10px; height: 10px; }
.pick { display: flex; gap: 7px; padding: 4px 5px 16px 4px; }
.pick select {
  flex: 1;
  height: 21px;
  padding: 0 2px;
  border: 1px solid #d0d0d0;
  background: var(--arrow), #fff;
  font-size: 11px;
}
.sketch { width: 52px; height: 19px; margin-top: 1px; border: 1px solid #999; border-radius: 2px; color: #999; }
.grid { flex: 1; min-height: 0; margin: 0 1px 0 9px; border: 1px solid #cfcfcf; background: #fff; }
.grid table { width: 100%; height: 100%; table-layout: fixed; border-collapse: collapse; font-family: "Liberation Mono", "Noto Sans CJK SC", monospace; line-height: 18px; }
.c-gut { width: 16px; }
.c-name { width: 138px; }
.grid tr { height: 22px; }
.grid td, .grid th { padding: 0 4px; text-align: left; border-bottom: 1px solid #ececec; }
.grid td:nth-child(2) { border-right: 1px solid #ececec; }
.grid td:nth-child(3) { font-size: 10px; }
.grid .cat, .grid .gut { background: #eee; }
.grid .cat th { font-size: 13px; }
.grid .sub svg { display: inline-block; width: 8px; height: 8px; margin-right: 8px; }
.grid .fill { height: auto; }
.grid .fill td { border-bottom: 0; background: #fff; }
.open { display: block; width: 5px; height: 5px; margin-left: 2px; background: linear-gradient(135deg, transparent 50%, #999 50%); }
.grid select {
  width: 100%;
  height: 20px;
  padding: 0;
  border: 0;
  font-size: 12px;
  background: var(--arrow), linear-gradient(#dfdfdf, #dfdfdf) right / 20px 20px no-repeat;
}
.apply { display: flex; justify-content: flex-end; padding: 5px 4px 8px; }
.apply button { width: 54px; height: 23px; border: 1px solid #aaa; background: #fdfdfd; }
.dock { display: flex; height: 24px; background: #e5e5e5; color: #666; line-height: 20px; }
.dock a { height: 22px; padding: 0 6px; }
.dock .active { background: #fff; color: #222; margin: 0 1px; }
.tree li { display: flex; align-items: center; gap: 4px; height: 26px; padding-left: 22px; background: #dfedea; }
.tree li svg { width: 16px; height: 16px; }

/* Viewport */
.stage { position: relative; flex: 1; min-width: 0; display: flex; flex-direction: column; }
.canvas { position: relative; flex: 1; min-height: 0; border-right: 1px solid #ccc; }
.scene { width: 100%; height: 100%; }
.box { fill: none; stroke: #f00; stroke-width: 2; stroke-dasharray: 12 6; }
.halo { fill: none; stroke: #fff; stroke-width: 3; stroke-dasharray: 14 4; }
.axis { font-size: 18px; fill: #666; text-anchor: middle; }
.viewcube { position: absolute; top: 58px; right: 53px; width: 66px; height: 64px; }
.viewcube text { font-size: 22px; font-weight: 300; fill: #999; text-anchor: middle; }
.message { position: absolute; left: 9px; bottom: 6px; font-size: 16px; line-height: 24px; color: #111; }
.command { flex: none; height: 31px; border-top: 1px solid #ccc; background: #e5e5e5; }
.cmdbox { width: 645px; height: 30px; display: flex; align-items: center; padding-left: 3px; border-radius: 3px; background: #fdfdfd; }
.grip { width: 3px; height: 16px; }
.cmdbox input { flex: 1; border: 0; outline: 0; background: none; padding: 0 10px; }
.cmdbox input::placeholder { color: #777; opacity: 1; }
.cmdbox button { width: 31px; height: 16px; border-left: 1px solid #ccc; }
.cmdbox button svg { width: 10px; height: 10px; }
.watermark { position: absolute; right: 90px; bottom: 21px; color: #b9b9b9; font-size: 20px; line-height: 26px; pointer-events: none; }
.watermark .small { font-size: 15px; line-height: 22px; }

/* Status bar */
.status { flex: none; height: 28px; display: flex; align-items: center; border-top: 1px solid #ccc; background: #f0f0f0; }
.tools { flex: 0 0 49%; display: flex; align-items: center; padding-left: 3px; }
.status button { width: 26px; height: 20px; }
.status button svg { width: 20px; height: 20px; padding: 1px; fill: none; stroke: #0f4c70; }
.status .on svg { background: #c3dcd8; outline: 1px solid #2f8f80; outline-offset: -1px; }
.status .soft svg { stroke: #3f83a8; }
.status .flat svg { stroke: none; }
.status .caret { width: 10px; }
.status .caret svg { width: 10px; height: 10px; padding: 0; }
.sep { flex: none; width: 7px; height: 16px; background: linear-gradient(#ccc, #ccc) center / 1px 16px no-repeat; }
.tools input { appearance: none; width: 61px; height: 14px; background: linear-gradient(#aaa, #aaa) center / 100% 1px no-repeat; }
.tools input::-webkit-slider-thumb { appearance: none; width: 5px; height: 14px; border: 1px solid #999; background: #eee; }
.coords { padding: 0 0 2px 5px; color: #444; }
.snaps { margin-left: auto; display: flex; align-items: center; padding-right: 5px; }
.taskbar { flex: none; height: 8px; border-top: 1px solid #9fb6bb; background: #c9e6ec; }
```
